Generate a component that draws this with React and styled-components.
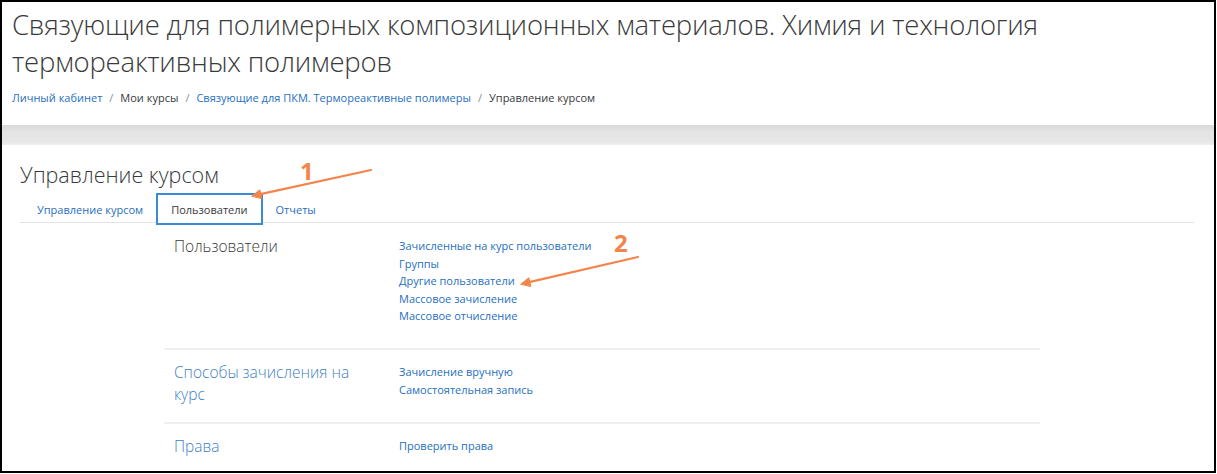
import React from 'react';
import styled, { createGlobalStyle } from 'styled-components';

const GlobalStyle = createGlobalStyle`
  html, body {
    margin: 0;
    padding: 0;
    background: #fff;
  }
  body {
    font-family: "Open Sans", "Liberation Sans", sans-serif;
    color: #373a3c;
  }
`;

const Frame = styled.div`
  position: relative;
  box-sizing: border-box;
  width: 1216px;
  height: 473px;
  border: 2px solid #000;
  overflow: hidden;
  background: #fff;
`;

const Header = styled.header`
  padding: 4px 0 0 10px;
  height: 123px;
  box-sizing: border-box;
`;

const Title = styled.h1`
  margin: 0;
  font-size: 27.5px;
  font-weight: 300;
  line-height: 37px;
  color: #3a3a3a;
  letter-spacing: -0.2px;
`;

const Crumbs = styled.nav`
  display: flex;
  align-items: center;
  margin-top: 10px;
  font-size: 11px;
  color: #373a3c;
`;

const Crumb = styled.a`
  color: ${p => (p.link ? '#1f6fc0' : '#373a3c')};
  text-decoration: none;
`;

const Sep = styled.span`
  color: #868e96;
  margin: 0 7px;
`;

const Band = styled.div`
  height: 20px;
  background: linear-gradient(#d9d9d9 0%, #e4e4e4 35%, #e6e6e6 80%, #eeeeee 100%);
`;

const Main = styled.main`
  padding: 16px 0 0 18px;
`;

const PageHeading = styled.h2`
  margin: 0;
  font-size: 21.5px;
  font-weight: 300;
  line-height: 28px;
  color: #373a3c;
`;

const Tabs = styled.ul`
  display: flex;
  align-items: flex-start;
  list-style: none;
  margin: 4px 0 0 0;
  padding: 0;
  width: 1174px;
  border-bottom: 1px solid #e3e3e3;
  height: 29px;
`;

const Tab = styled.li`
  display: flex;
  align-items: center;
  box-sizing: border-box;
  padding: 0 ${p => (p.active ? 13 : 11)}px 0 ${p => (p.first ? 15 : p.active ? 13 : 11)}px;
  font-size: 11px;
  color: ${p => (p.active ? '#373a3c' : '#1f6fc0')};
  border: 2px solid ${p => (p.active ? '#3b8ad6' : 'transparent')};
  background: ${p => (p.active ? '#fff' : 'transparent')};
  height: 32px;
`;

const Sections = styled.div`
  margin-left: 144px;
  width: 876px;
`;

const Section = styled.section`
  display: grid;
  grid-template-columns: 225px 1fr;
  padding: ${p => p.pad || '11px 0 0 10px'};
  min-height: ${p => p.h || 0}px;
  box-sizing: border-box;
  border-top: ${p => (p.divided ? '2px solid #efefef' : 'none')};
`;

const SectionTitle = styled.h3`
  margin: 0;
  font-size: 15.5px;
  font-weight: 300;
  line-height: 22px;
  color: ${p => (p.link ? '#3f7fc4' : '#373a3c')};
  padding-right: 30px;
`;

const LinkList = styled.ul`
  list-style: none;
  margin: 0;
  padding: 2px 0 0 0;
`;

const LinkItem = styled.li`
  font-size: 11px;
  line-height: 17.6px;
  color: #1f6fc0;
`;

const Overlay = styled.svg`
  position: absolute;
  left: 0;
  top: 0;
  pointer-events: none;
`;

const Marker = styled.text`
  font-family: "Open Sans", "Liberation Sans", sans-serif;
  font-weight: 700;
  font-size: 24px;
  fill: #f4844a;
`;

const sections = [
  {
    title: 'Пользователи',
    links: ['Зачисленные на курс пользователи', 'Группы', 'Другие пользователи', 'Массовое зачисление', 'Массовое отчисление'],
    h: 125,
  },
  {
    title: 'Способы зачисления на курс',
    link: true,
    links: ['Зачисление вручную', 'Самостоятельная запись'],
    h: 74,
  },
  {
    title: 'Права',
    link: true,
    links: ['Проверить права'],
    h: 60,
  },
];

const Arrow = ({ x1, y1, x2, y2 }) => {
  const a = Math.atan2(y2 - y1, x2 - x1);
  const len = 10;
  const w = 0.45;
  const p1 = [x2 - len * Math.cos(a - w), y2 - len * Math.sin(a - w)];
  const p2 = [x2 - len * Math.cos(a + w), y2 - len * Math.sin(a + w)];
  return (
    <g stroke="#f4844a" fill="#f4844a" strokeLinecap="round">
      <line x1={x1} y1={y1} x2={x2 - 4 * Math.cos(a)} y2={y2 - 4 * Math.sin(a)} strokeWidth="2.2" />
      <polygon points={`${x2},${y2} ${p1[0]},${p1[1]} ${p2[0]},${p2[1]}`} strokeWidth="1" />
    </g>
  );
};

export default function App() {
  return (
    <>
      <GlobalStyle />
      <Frame>
        <Header>
          <Title>
            Связующие для полимерных композиционных материалов. Химия и технология термореактивных полимеров
          </Title>
          <Crumbs>
            <Crumb link>Личный кабинет</Crumb>
            <Sep>/</Sep>
            <Crumb>Мои курсы</Crumb>
            <Sep>/</Sep>
            <Crumb link>Связующие для ПКМ. Термореактивные полимеры</Crumb>
            <Sep>/</Sep>
            <Crumb>Управление курсом</Crumb>
          </Crumbs>
        </Header>
        <Band />
        <Main>
          <PageHeading>Управление курсом</PageHeading>
          <Tabs>
            <Tab first>Управление курсом</Tab>
            <Tab active>Пользователи</Tab>
            <Tab>Отчеты</Tab>
          </Tabs>
          <Sections>
            {sections.map((s, i) => (
              <Section key={s.title} divided={i > 0} h={s.h} pad={i === 0 ? '12px 0 0 10px' : undefined}>
                <SectionTitle link={s.link}>{s.title}</SectionTitle>
                <LinkList>
                  {s.links.map(l => (
                    <LinkItem key={l}>{l}</LinkItem>
                  ))}
                </LinkList>
              </Section>
            ))}
          </Sections>
        </Main>
        <Overlay width="1216" height="473">
          <Arrow x1={369} y1={168} x2={250} y2={194} />
          <Marker x={298} y={178}>1</Marker>
          <Arrow x1={636} y1={255} x2={519} y2={282} />
          <Marker x={612} y={250}>2</Marker>
        </Overlay>
      </Frame>
    </>
  );
}
